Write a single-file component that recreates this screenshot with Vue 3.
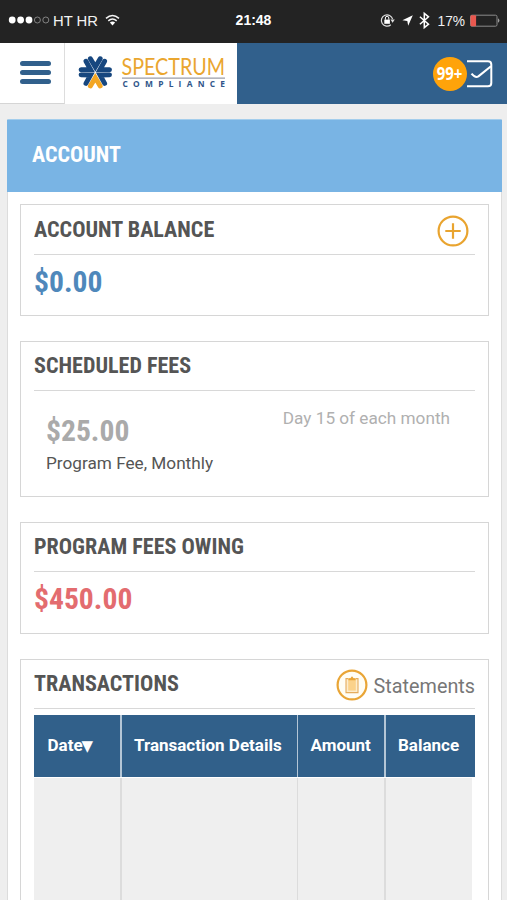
<template>
  <div class="screen">
    <div class="status-bar">
      <div class="status-left">
        <svg width="42" height="12" viewBox="0 0 42 12">
          <circle v-for="n in 5" :key="n" :cx="4.2 + (n - 1) * 8.4" cy="6" :r="n < 4 ? 3.4 : 3" :class="n < 4 ? 'dot-on' : 'dot-off'" />
        </svg>
        <svg class="carrier" width="46" height="20" viewBox="0 0 46 20">
          <text x="0" y="15.5" textLength="45" lengthAdjust="spacingAndGlyphs">HT HR</text>
        </svg>
        <svg class="wifi" width="15" height="12" viewBox="0 0 15 12">
          <path d="M1 4.4Q7.5 -1.5 14 4.4M3.3 6.9Q7.5 3.2 11.7 6.9" fill="none" stroke="#f4f4f4" stroke-width="1.5" />
          <path d="M4.9 8.5Q7.5 6.4 10.1 8.5L7.5 11.4Z" fill="#fff" />
        </svg>
      </div>
      <span class="clock">21:48</span>
      <svg class="status-icons" width="122" height="20" viewBox="0 0 122 20">
        <!-- rotation lock -->
        <path d="M11.8 14.8A5.7 5.7 0 1 1 13.6 9.2" fill="none" stroke="#ddd" stroke-width="1.2" />
        <path d="M11.4 9.4h4.4l-2.2 3.3z" fill="#ddd" />
        <rect x="5.3" y="9.6" width="5.6" height="4.2" fill="#fff" />
        <path d="M6.4 9.7V8a1.7 1.7 0 0 1 3.4 0v1.7" fill="none" stroke="#fff" stroke-width="1" />
        <!-- location -->
        <path d="M33.8 5.2l-4.6 10.5-.9-4.8-4.9-.6z" fill="#fff" />
        <!-- bluetooth -->
        <path d="M40.9 6.7l8.6 7.5-4.2 3.4V3.4l4.2 3.4-8.6 7.5" fill="none" stroke="#fff" stroke-width="1.5" />
        <text x="58.5" y="15.5" textLength="27.5" lengthAdjust="spacingAndGlyphs">17%</text>
        <!-- battery -->
        <rect x="91.5" y="5.2" width="26.5" height="11" rx="1.5" fill="none" stroke="#8b8b8b" />
        <rect x="91.5" y="5.2" width="5.6" height="11" rx="1" fill="#e9584f" />
        <path d="M119.2 8.2q2.4 2.3 0 4.6z" fill="#bbb" />
      </svg>
    </div>

    <header class="top-bar">
      <button class="menu" aria-label="Menu">
        <span></span><span></span><span></span>
      </button>
      <div class="logo">
        <svg width="172" height="60" viewBox="65 43 172 60">
          <!-- six chevrons, the legs of two neighbours make one arm -->
          <g transform="translate(95.3 72.3)" fill="none" stroke-width="4.9" stroke-linecap="round">
            <path
              v-for="angle in chevrons"
              :key="angle"
              d="M-4.9 13.6L0 5.4L4.9 13.6"
              :stroke="angle === 0 ? '#f3a623' : '#17477f'"
              :transform="`rotate(${angle})`"
            />
          </g>
          <text class="brand" transform="translate(121.5 75) scale(0.865 1)">SPECTRUM</text>
          <path d="M122 78.1H225" stroke="#9a9da8" stroke-width="1.1" />
          <text class="brand-sub" x="122.5" y="87.4" textLength="102.5">COMPLIANCE</text>
        </svg>
      </div>
      <div class="inbox">
        <span class="badge"><span>99+</span></span>
        <svg width="26" height="30" viewBox="0 0 26 30">
          <path d="M0 2.2H21Q24.3 2.2 24.3 5.5V24Q24.3 27.3 21 27.3H0" fill="none" stroke="#fff" stroke-width="2" />
          <path d="M4.5 14.7Q8.4 19.4 11.4 17.4L24 7.2" fill="none" stroke="#fff" stroke-width="2.1" />
        </svg>
      </div>
    </header>

    <main class="page">
      <h1 class="page-title"><span class="cond">Account</span></h1>

      <section class="box balance">
        <div class="box-head">
          <h2 class="cond">Account Balance</h2>
          <svg class="add" width="32" height="32" viewBox="0 0 32 32">
            <circle cx="16" cy="16" r="14.4" />
            <path d="M8.3 16h15.4M16 8.3v15.4" />
          </svg>
        </div>
        <p class="amount cond blue">$0.00</p>
      </section>

      <section class="box scheduled">
        <div class="box-head"><h2 class="cond">Scheduled Fees</h2></div>
        <div class="fee">
          <div>
            <p class="amount cond grey">$25.00</p>
            <p class="fee-name">Program Fee, Monthly</p>
          </div>
          <span class="fee-day">Day 15 of each month</span>
        </div>
      </section>

      <section class="box owing">
        <div class="box-head"><h2 class="cond">Program Fees Owing</h2></div>
        <p class="amount cond red">$450.00</p>
      </section>

      <section class="box transactions">
        <div class="box-head">
          <h2 class="cond">Transactions</h2>
          <div class="statements">
            <svg width="32" height="32" viewBox="0 0 32 32">
              <circle cx="16" cy="16" r="14.4" fill="#fffdf4" stroke="#e9a536" stroke-width="2.2" />
              <path d="M12 9.6h-2v14h12v-14h-2" fill="#fdeccb" stroke="#e5ac5c" stroke-width="1.1" />
              <path d="M12.2 9.4h7.6v12.2h-7.6z" fill="#fbd28a" />
              <path d="M12.4 11.3V9.2h2l1.6-1.9 1.6 1.9h2v2.1z" fill="#e9a536" />
            </svg>
            <span>Statements</span>
          </div>
        </div>
        <div class="table">
          <div class="row head">
            <span v-for="col in columns" :key="col">{{ col }}<i v-if="col === sortedBy">▼</i></span>
          </div>
          <div class="row body">
            <span v-for="col in columns" :key="col"></span>
          </div>
        </div>
      </section>
    </main>
  </div>
</template>

<script setup>
const columns = ['Date', 'Transaction Details', 'Amount', 'Balance']
const sortedBy = 'Date'
const chevrons = [0, 60, 120, 180, 240, 300]
</script>

<style>
body {
  overflow: hidden;
}
</style>

<style scoped>
.screen {
  height: 900px;
  overflow: hidden;
  background: #eeeeee;
  font-family: Roboto, 'Liberation Sans', sans-serif;
  color: #555;
}

h1,
h2,
p {
  margin: 0;
}

.cond {
  font-family: 'Roboto Condensed', Roboto, sans-serif;
  font-stretch: 75%;
  font-weight: 700;
}

.status-bar {
  height: 43px;
  padding: 0 6px 3px 8px;
  box-sizing: border-box;
  display: grid;
  grid-template-columns: 1fr auto 1fr;
  align-items: center;
  background: #232323;
  color: #fff;
  font-family: 'Liberation Sans', Arial, sans-serif;
}

.status-bar text {
  fill: #f2f2f2;
  font-size: 15px;
}

.status-left {
  display: flex;
  align-items: center;
}

.carrier {
  margin-left: 3px;
}

.wifi {
  margin-left: 6px;
}

.clock {
  margin-right: 2px;
  font-size: 14px;
  font-weight: 700;
}

.status-icons {
  justify-self: end;
}

.dot-on {
  fill: #fff;
}

.dot-off {
  fill: none;
  stroke: #999;
  stroke-width: 0.8;
}

.top-bar {
  height: 61px;
  display: flex;
  background: #31608c;
}

.menu {
  width: 65px;
  padding: 0 13px 2px 20px;
  box-sizing: border-box;
  border: 0;
  border-right: 1px solid #ddd;
  border-bottom: 1px solid #d5d5d5;
  background: #fff;
  display: flex;
  flex-direction: column;
  justify-content: center;
  gap: 4px;
}

.menu span {
  height: 5px;
  border-radius: 3px;
  background: #31608c;
}

.logo {
  width: 172px;
  background: #fff;
}

.brand {
  font: 400 22.8px Lato, sans-serif;
  fill: #eaa62f;
}

.brand-sub {
  font: 700 8.4px 'Open Sans', sans-serif;
  fill: #31568a;
}

.inbox {
  margin-left: auto;
  padding-right: 14px;
  display: flex;
  align-items: center;
}

.badge {
  width: 34px;
  height: 34px;
  border-radius: 50%;
  background: #ffa30a;
  color: #fff;
  display: flex;
  align-items: center;
  justify-content: center;
}

.badge span {
  font-family: 'Open Sans', sans-serif;
  font-size: 17px;
  font-weight: 700;
  transform: scaleX(0.88);
}

.page {
  height: 800px;
  margin: 15px 5px 0 7px;
  background: #fff;
  border: 1px solid #dcdcdc;
  border-top-color: #a3cdec;
  box-sizing: border-box;
}

.page-title {
  height: 72px;
  margin: 0 -1px 12px;
  padding: 0 0 3px 25px;
  box-sizing: border-box;
  display: flex;
  align-items: center;
  background: #79b4e4;
  color: #fff;
  font-size: 22px;
  text-transform: uppercase;
}

.box {
  height: 112px;
  margin: 0 12px 25px;
  padding: 0 13px;
  box-sizing: border-box;
  border: 1px solid #d6d6d6;
}

.box-head {
  height: 49px;
  box-sizing: border-box;
  border-bottom: 1px solid #d8d8d8;
  display: flex;
  align-items: center;
  justify-content: space-between;
}

.box-head h2 {
  margin-top: -2px;
  font-size: 22.1px;
  line-height: 26px;
  text-transform: uppercase;
}

.add {
  margin: 2px 6px 0 0;
  fill: none;
  stroke: #e9a42f;
  stroke-width: 2.2;
}

.amount {
  padding-top: 9px;
  font-size: 29.6px;
  line-height: 36px;
}

.blue {
  color: #4f88bb;
}

.grey {
  color: #aaa;
}

.red {
  color: #e36c6f;
}

.scheduled {
  height: 156px;
}

.fee {
  padding: 13px 24px 0 12px;
  display: flex;
  justify-content: space-between;
}

.fee-name,
.fee-day {
  font-size: 17.2px;
  line-height: 24px;
}

.fee-name {
  margin-top: 2px;
}

.fee-day {
  margin: 2px 1px 0 0;
  color: #b0b0b0;
}

.balance .box-head {
  height: 50px;
}

.balance .box-head h2 {
  margin-top: -1px;
}

.transactions {
  height: 300px;
}

.transactions .box-head h2 {
  margin-top: -3px;
}

.statements {
  margin-top: 2px;
  display: flex;
  align-items: center;
  gap: 6px;
  color: #777;
  font-size: 19.8px;
}

.statements span {
  padding-top: 2px;
}

.table {
  margin-top: 6px;
}

.row {
  display: grid;
  grid-template-columns: 86px 175px 86px 1fr;
  gap: 1.5px;
}

.head {
  height: 62px;
  background: #b4c6d6;
}

.head span {
  padding-left: 12.5px;
  background: #31608a;
  color: #fff;
  font-size: 17px;
  font-weight: 700;
  line-height: 60px;
  white-space: nowrap;
}

.head span:first-child {
  padding-left: 13.5px;
}

.head i {
  margin-left: -1px;
  font-family: 'DejaVu Sans', sans-serif;
  font-size: 15px;
  font-style: normal;
  font-weight: 400;
  line-height: 1;
}

.body {
  height: 130px;
  margin: 1px 3px 0 0;
  background: #dcdcdc;
}

.body span {
  background: #efefef;
}
</style>
